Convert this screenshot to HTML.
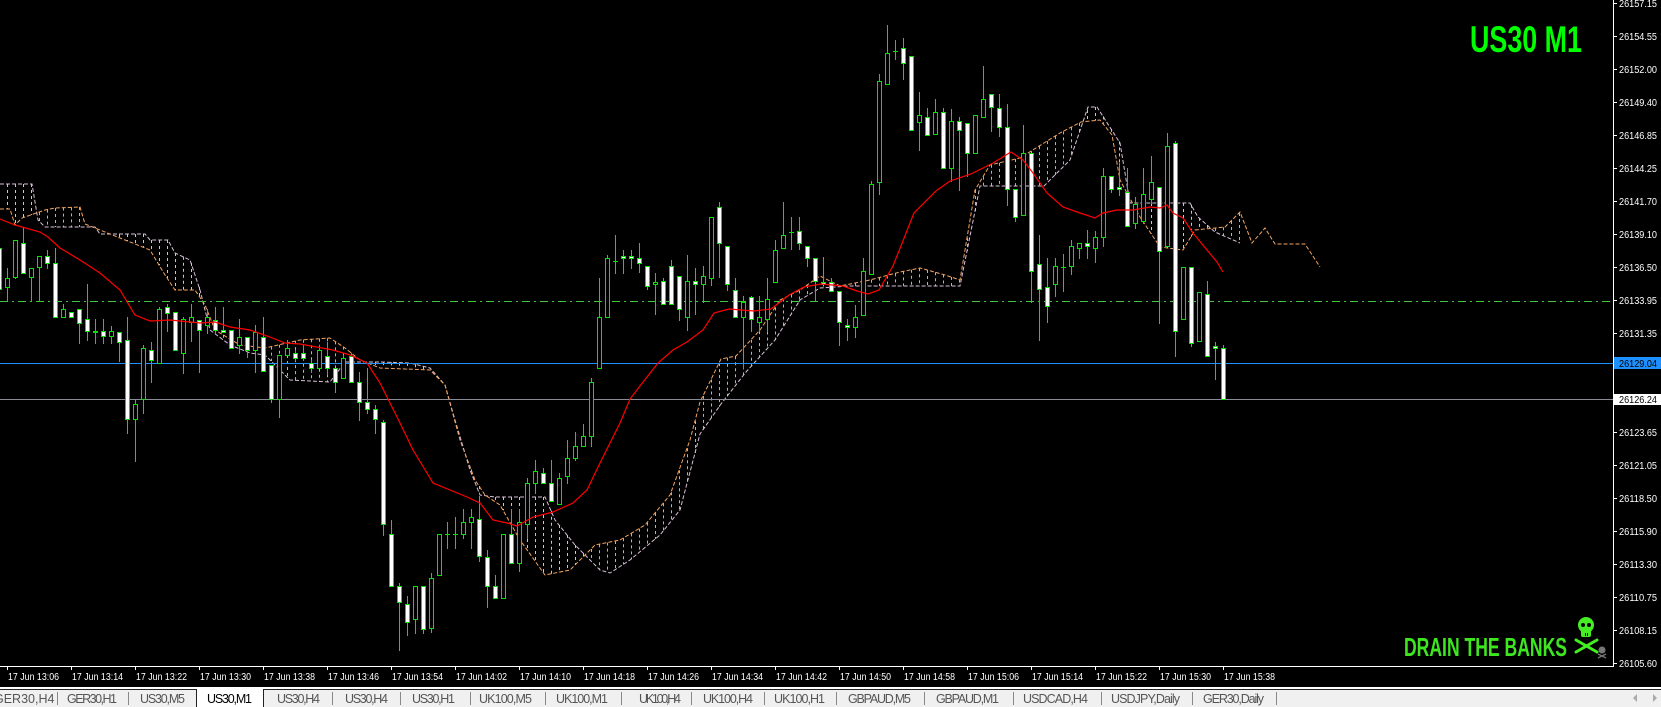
<!DOCTYPE html>
<html><head><meta charset="utf-8">
<style>
html,body{margin:0;padding:0;background:#000;width:1661px;height:707px;overflow:hidden}
svg{position:absolute;left:0;top:0}
text{font-family:"Liberation Sans",sans-serif}
</style></head>
<body>
<svg id="s" width="1661" height="707" viewBox="0 0 1661 707" xmlns="http://www.w3.org/2000/svg">
<rect x="0" y="0" width="1661" height="707" fill="#000"/>
<g id="cloud"></g>
<line x1="0" y1="301.5" x2="1613" y2="301.5" stroke="#3fc83f" stroke-width="1" stroke-dasharray="8 4 2 4"/>
<line x1="0" y1="363.5" x2="1613" y2="363.5" stroke="#1e90ff" stroke-width="1"/>
<line x1="0" y1="399.5" x2="1613" y2="399.5" stroke="#8c8c98" stroke-width="1"/>
<g id="candles"></g>
<polyline id="ma" fill="none" stroke="#ff0000" stroke-width="1.2" points=""/>

<!-- axes -->
<line x1="1613.5" y1="0" x2="1613.5" y2="667" stroke="#fff"/>
<line x1="0" y1="666.5" x2="1614" y2="666.5" stroke="#fff"/>
<g id="axis" font-size="10" fill="#fff"></g>
<rect x="1614" y="357" width="47" height="12" fill="#1e90ff"/>
<text x="1619" y="367" font-size="10" fill="#000" textLength="38" lengthAdjust="spacingAndGlyphs">26129.04</text>
<rect x="1614" y="394" width="47" height="11" fill="#fff"/>
<text x="1619" y="403" font-size="10" fill="#000" textLength="38" lengthAdjust="spacingAndGlyphs">26126.24</text>

<g id="times" font-size="10" fill="#fff"></g>

<!-- titles -->
<text x="1470" y="52" font-size="37" font-weight="bold" fill="#00ff00" textLength="112" lengthAdjust="spacingAndGlyphs" style="font-family:'Liberation Sans Narrow','Liberation Sans',sans-serif">US30 M1</text>
<text x="1404" y="656" font-size="26" font-weight="bold" fill="#3ee620" textLength="163" lengthAdjust="spacingAndGlyphs" style="font-family:'Liberation Sans Narrow','Liberation Sans',sans-serif">DRAIN THE BANKS</text>
<!-- skull -->
<g fill="#44ee22">
<ellipse cx="1586" cy="625" rx="8" ry="8"/>
<rect x="1581" y="628" width="10" height="9" rx="2"/>
<line x1="1576" y1="640" x2="1597" y2="652" stroke="#44ee22" stroke-width="3" stroke-linecap="round"/>
<line x1="1597" y1="640" x2="1576" y2="652" stroke="#44ee22" stroke-width="3" stroke-linecap="round"/>
</g>
<g fill="#000"><circle cx="1583" cy="625" r="2"/><circle cx="1589" cy="625" r="2"/><rect x="1585" y="633" width="1" height="3"/><rect x="1587" y="633" width="1" height="3"/></g>
<g fill="#777"><circle cx="1602" cy="650" r="3.5"/><line x1="1598" y1="654" x2="1606" y2="658" stroke="#777" stroke-width="1.3"/><line x1="1606" y1="654" x2="1598" y2="658" stroke="#777" stroke-width="1.3"/></g>

<!-- bottom tab bar -->
<rect x="0" y="687" width="1661" height="2" fill="#fff"/>
<rect x="0" y="689" width="1661" height="18" fill="#f0f0f0"/>
<line x1="0" y1="689.5" x2="196" y2="689.5" stroke="#222"/>
<line x1="263" y1="689.5" x2="1661" y2="689.5" stroke="#222"/>
<rect x="196" y="689" width="67" height="18" fill="#fff"/>
<line x1="196.5" y1="689" x2="196.5" y2="707" stroke="#222"/>
<line x1="263.5" y1="689" x2="263.5" y2="707" stroke="#222"/>
<g stroke="#888">
<line x1="57.5" y1="692" x2="57.5" y2="705"/><line x1="128.5" y1="692" x2="128.5" y2="705"/>
<line x1="332.5" y1="692" x2="332.5" y2="705"/><line x1="400.5" y1="692" x2="400.5" y2="705"/>
<line x1="470.5" y1="692" x2="470.5" y2="705"/><line x1="545.5" y1="692" x2="545.5" y2="705"/>
<line x1="621.5" y1="692" x2="621.5" y2="705"/><line x1="691.5" y1="692" x2="691.5" y2="705"/>
<line x1="764.5" y1="692" x2="764.5" y2="705"/><line x1="836.5" y1="692" x2="836.5" y2="705"/>
<line x1="924.5" y1="692" x2="924.5" y2="705"/><line x1="1013.5" y1="692" x2="1013.5" y2="705"/>
<line x1="1101.5" y1="692" x2="1101.5" y2="705"/><line x1="1192.5" y1="692" x2="1192.5" y2="705"/>
<line x1="1276.5" y1="692" x2="1276.5" y2="705"/>
</g>
<g font-size="12.5" fill="#555">
<text x="-6" y="703">GER30,H4</text>
<text x="67" y="703" textLength="50">GER30,H1</text>
<text x="140" y="703" textLength="45">US30,M5</text>
<text x="207" y="703" textLength="45" fill="#000">US30,M1</text>
<text x="277" y="703" textLength="43">US30,H4</text>
<text x="345" y="703" textLength="43">US30,H4</text>
<text x="412" y="703" textLength="43">US30,H1</text>
<text x="479" y="703" textLength="53">UK100,M5</text>
<text x="556" y="703" textLength="52">UK100,M1</text>
<text x="639" y="703" textLength="42">UK100,H4</text>
<text x="703" y="703" textLength="50">UK100,H4</text>
<text x="774" y="703" textLength="51">UK100,H1</text>
<text x="848" y="703" textLength="63">GBPAUD,M5</text>
<text x="936" y="703" textLength="63">GBPAUD,M1</text>
<text x="1023" y="703" textLength="65">USDCAD,H4</text>
<text x="1111" y="703" textLength="69">USDJPY,Daily</text>
<text x="1203" y="703" textLength="61">GER30,Daily</text>
</g>
<path d="M1637 694 L1633 698 L1637 702 Z" fill="#aaa"/>
<path d="M1653 694 L1657 698 L1653 702 Z" fill="#aaa"/>
</svg>
<script>
(function(){
var NS="http://www.w3.org/2000/svg";
function el(n,a,p){var e=document.createElementNS(NS,n);for(var k in a)e.setAttribute(k,a[k]);p.appendChild(e);return e;}
// axis labels
var ax=document.getElementById("axis");
var vals=["26157.15","26154.55","26152.00","26149.40","26146.85","26144.25","26141.70","26139.10","26136.50","26133.95","26131.35",null,null,"26123.65","26121.05","26118.50","26115.90","26113.30","26110.75","26108.15","26105.60"];
for(var k=0;k<21;k++){var y=3+33*k;
 el("line",{x1:1613,y1:y+0.5,x2:1617,y2:y+0.5,stroke:"#fff"},ax);
 if(vals[k]){var t=el("text",{x:1619,y:y+4,textLength:38,lengthAdjust:"spacingAndGlyphs"},ax);t.textContent=vals[k];}}
// time labels
var tm=document.getElementById("times");
var times=["13:06","13:14","13:22","13:30","13:38","13:46","13:54","14:02","14:10","14:18","14:26","14:34","14:42","14:50","14:58","15:06","15:14","15:22","15:30","15:38"];
for(var i=0;i<times.length;i++){var x=7+64*i;
 el("line",{x1:x+0.5,y1:666,x2:x+0.5,y2:670,stroke:"#fff"},tm);
 var t=el("text",{x:x+1,y:680,textLength:51,lengthAdjust:"spacingAndGlyphs"},tm);t.textContent="17 Jun "+times[i];}
// cloud
var A=[[0,209],[10,209],[15,225],[22,218],[45,210],[55,208],[80,207],[85,224],[110,234],[125,240],[150,250],[165,275],[175,290],[195,290],[205,305],[215,330],[240,345],[265,348],[300,340],[330,338],[345,348],[360,360],[380,368],[430,370],[445,385],[460,440],[475,480],[485,495],[500,505],[520,540],[545,575],[570,570],[595,545],[620,540],[645,525],[670,495],[690,440],[700,402],[721,359],[736,356],[760,330],[780,300],[800,290],[820,276],[840,286],[870,280],[900,272],[920,268],[945,275],[960,280],[975,190],[990,165],[1020,158],[1060,133],[1081,122],[1100,120],[1112,135],[1120,180],[1140,217],[1160,247],[1183,250],[1195,230],[1225,227],[1240,212],[1252,243],[1265,228],[1275,244],[1305,244],[1320,267]];
var B=[[0,184],[32,184],[38,220],[45,227],[95,227],[100,234],[145,234],[150,240],[168,240],[175,253],[190,260],[200,290],[210,330],[230,345],[250,353],[265,355],[290,380],[330,382],[345,362],[380,362],[410,363],[430,368],[445,385],[455,420],[470,470],[480,495],[495,497],[545,497],[555,520],[575,545],[600,570],[610,573],[630,560],[660,535],[680,510],[700,434],[721,404],[746,372],[775,340],[800,300],[820,288],[850,286],[960,286],[980,186],[1044,186],[1070,160],[1088,107],[1097,107],[1120,143],[1130,203],[1190,203],[1198,217],[1215,232],[1240,243]];
function interp(P,x){if(x<P[0][0]||x>P[P.length-1][0])return null;for(var i=1;i<P.length;i++){if(x<=P[i][0]){var a=P[i-1],b=P[i];var f=(x-a[0])/((b[0]-a[0])||1);return a[1]+f*(b[1]-a[1]);}}return null;}
var cl=document.getElementById("cloud");
for(var m=-1;m<=155;m++){var x=7+8*m;var ya=interp(A,x),yb=interp(B,x);if(ya==null||yb==null)continue;
 if(Math.abs(ya-yb)<3)continue;
 el("line",{x1:x+0.5,y1:Math.min(ya,yb),x2:x+0.5,y2:Math.max(ya,yb),stroke:ya<yb?"#f4a460":"#d8bfd8","stroke-width":1,"stroke-dasharray":"3 3"},cl);}
function pts(P){return P.map(function(p){return p[0]+","+p[1];}).join(" ");}
el("polyline",{points:pts(B),fill:"none",stroke:"#d8bfd8","stroke-width":1,"stroke-dasharray":"4 2"},cl);
el("polyline",{points:pts(A),fill:"none",stroke:"#f4a460","stroke-width":1,"stroke-dasharray":"4 2"},cl);
// MA
var MA=[[0,219],[15,225],[40,232],[48,237],[60,248],[80,260],[100,273],[120,290],[135,315],[150,321],[170,320],[200,323],[215,322],[230,327],[250,330],[270,337],[285,343],[300,344],[333,350],[350,355],[367,363],[380,383],[400,423],[413,450],[427,473],[433,483],[450,490],[467,497],[480,503],[493,520],[507,523],[517,526],[533,517],[553,512],[573,503],[587,490],[600,463],[620,423],[630,399],[647,377],[658,363],[673,350],[687,342],[703,330],[714,313],[729,309],[754,311],[771,309],[789,295],[804,287],[821,284],[843,286],[857,291],[868,294],[879,290],[893,266],[914,213],[936,191],[950,181],[971,174],[993,163],[1011,152],[1023,160],[1033,173],[1047,193],[1063,207],[1080,213],[1095,218],[1103,213],[1117,210],[1133,210],[1150,207],[1160,208],[1167,205],[1173,213],[1183,218],[1193,233],[1207,250],[1217,262],[1223,272]];
document.getElementById("ma").setAttribute("points",pts(MA));
// candles: m, bodyTop, bodyBot, wickTop, wickBot, type(1 white,0 outline,2 doji)
var C=[[-1,248,289,248,289,1],[0,278,287,268,300,0],[1,240,277,240,278,0],[2,243,273,227,273,1],[3,268,277,268,301,0],[4,256,267,256,301,0],[5,256,263,250,268,1],[6,263,317,248,317,1],[7,309,317,304,317,0],[8,312,317,312,317,1],[9,309,323,309,343,1],[10,319,331,284,340,1],[11,331,332,319,343,1],[12,331,336,319,343,1],[13,331,336,326,343,0],[14,332,342,332,361,1],[15,340,419,317,433,1],[16,404,419,400,461,0],[17,348,399,345,413,0],[18,350,360,342,382,1],[19,309,363,307,363,0],[20,307,313,304,331,1],[21,312,350,312,350,1],[22,319,353,317,373,0],[23,317,322,304,341,0],[24,320,330,320,372,1],[25,317,325,309,333,0],[26,320,330,307,333,1],[27,330,332,307,332,1],[28,330,348,330,348,1],[29,337,345,319,353,0],[30,337,350,337,357,1],[31,332,350,325,372,0],[32,337,371,317,371,1],[33,365,399,365,402,1],[34,355,399,355,417,0],[35,348,355,340,355,0],[36,353,358,350,360,1],[37,353,358,345,360,1],[38,363,368,360,372,1],[39,350,368,345,368,0],[40,356,368,342,373,1],[41,368,382,368,392,1],[42,358,378,355,378,0],[43,356,382,353,382,1],[44,382,402,372,420,1],[45,402,409,368,413,1],[46,409,419,405,433,1],[47,422,524,420,535,1],[48,534,586,520,586,1],[49,586,602,583,650,1],[50,604,622,596,635,1],[51,586,619,586,633,0],[52,586,629,586,633,1],[53,578,628,573,632,0],[54,534,575,534,575,0],[55,534,534,522,548,2],[56,534,534,517,548,2],[57,522,534,509,538,0],[58,517,522,509,548,0],[59,519,556,496,561,1],[60,557,586,550,607,1],[61,586,598,575,598,1],[62,534,598,534,598,0],[63,534,563,509,563,1],[64,522,563,509,571,0],[65,483,524,478,538,0],[66,471,483,460,493,0],[67,473,483,468,483,1],[68,483,501,460,501,1],[69,478,504,473,504,0],[70,458,476,440,483,0],[71,446,458,432,460,0],[72,436,446,424,446,0],[73,382,436,378,446,0],[74,317,368,278,368,0],[75,258,317,255,317,0],[76,261,261,235,273,2],[77,256,258,250,273,1],[78,256,258,250,268,1],[79,258,263,243,272,1],[80,266,286,266,289,1],[81,282,284,273,314,0],[82,281,304,278,304,1],[83,266,304,260,304,1],[84,276,309,276,320,1],[85,281,317,255,330,0],[86,281,284,268,314,1],[87,276,284,266,302,0],[88,217,278,217,285,0],[89,207,243,202,277,1],[90,246,284,246,290,1],[91,290,317,278,317,1],[92,302,317,296,368,0],[93,297,319,296,331,1],[94,317,322,296,331,0],[95,299,319,278,331,0],[96,250,282,240,282,0],[97,235,248,202,248,0],[98,232,232,217,249,2],[99,231,243,217,249,1],[100,246,258,246,266,1],[101,258,281,258,300,1],[102,282,284,257,284,1],[103,282,291,278,291,1],[104,291,322,291,345,1],[105,325,327,319,340,1],[106,317,327,305,337,0],[107,271,315,258,315,0],[108,184,274,181,274,0],[109,81,182,74,194,0],[110,53,84,25,84,0],[111,51,51,40,59,2],[112,48,63,38,79,1],[113,56,130,56,130,1],[114,115,122,92,150,0],[115,117,135,108,135,1],[116,112,134,99,134,0],[117,112,168,108,168,1],[118,121,168,109,181,0],[119,121,130,117,190,1],[120,123,153,123,176,1],[121,115,153,115,153,0],[122,99,117,66,117,0],[123,94,107,94,131,1],[124,108,127,94,136,1],[125,127,189,104,205,1],[126,189,217,189,221,1],[127,153,215,125,215,0],[128,153,271,153,302,1],[129,264,289,235,340,1],[130,287,306,258,322,1],[131,266,284,258,296,0],[132,267,267,254,291,2],[133,246,266,240,274,0],[134,243,248,243,258,0],[135,243,246,230,258,1],[136,237,248,231,262,0],[137,176,237,168,246,0],[138,176,189,176,192,1],[139,187,189,163,195,1],[140,192,226,168,226,1],[141,204,223,197,228,0],[142,194,221,168,223,0],[143,182,199,156,203,0],[144,187,251,187,323,1],[145,146,246,133,246,0],[146,143,331,141,356,1],[147,267,319,267,319,0],[148,267,343,267,346,1],[149,292,341,292,341,0],[150,294,356,281,356,1],[151,346,348,342,379,1],[152,348,399,345,399,1]];
var cg=document.getElementById("candles");var G="#00e600";
C.forEach(function(c){var x=7+8*c[0];
 el("rect",{x:x,y:Math.min(c[3],c[1]),width:1,height:Math.max(c[4],c[2])-Math.min(c[3],c[1])+1,fill:G},cg);
 if(c[5]==2){el("rect",{x:x-2,y:c[1],width:5,height:1,fill:G},cg);return;}
 var h=Math.max(c[2]-c[1],1);
 el("rect",{x:x-1.5,y:c[1]+0.5,width:4,height:h,fill:c[5]==1?"#fff":"#000",stroke:G,"stroke-width":1},cg);});
})();
</script>
</body></html>
